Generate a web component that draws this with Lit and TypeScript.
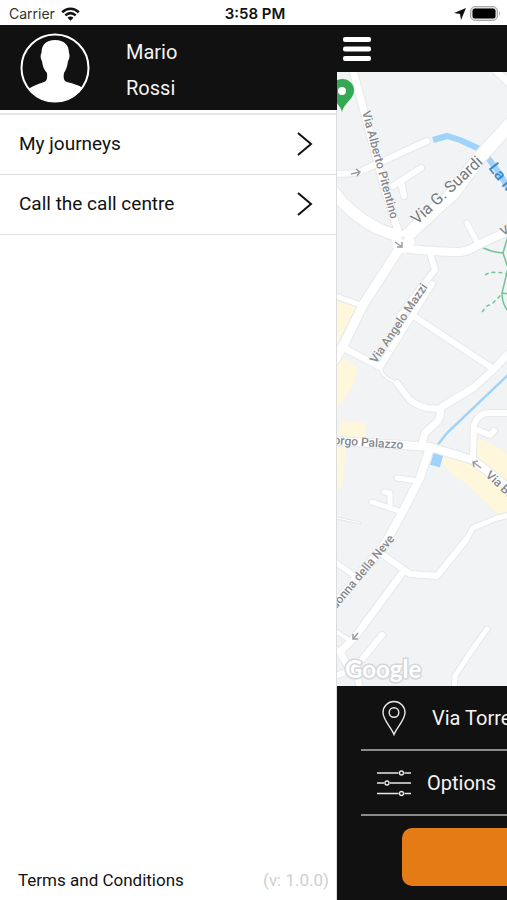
import { LitElement, html, css, svg } from "lit";
import { customElement } from "lit/decorators.js";

interface Road {
  d: string;
  w: number;
}

const roads: Road[] = [
  { d: "M337 518L360 523", w: 1 },
  { d: "M380 367Q382 378 397 383", w: 2 },
  { d: "M353 70L365 115L385 190L401 240", w: 7 },
  { d: "M335 174L357 173L427 141", w: 6 },
  { d: "M421 168L393 186M401 182L404 196", w: 6 },
  { d: "M334 192Q350 214 377 228L402 238", w: 11 },
  { d: "M400 243L414 229L453 193L480 157L510 124", w: 13 },
  { d: "M493 68L510 84", w: 7 },
  { d: "M400 240L410 249Q440 252 460 252Q469 251 478 245L510 230", w: 8 },
  { d: "M467 223L478 244", w: 5 },
  { d: "M401 246L363 305L342 348L335 360", w: 9 },
  { d: "M335 296L363 306", w: 5 },
  { d: "M342 347L380 367L432 284M430 253L435 270L427 280L400 316", w: 6 },
  { d: "M415 317L492 368", w: 6 },
  { d: "M397 383L410 400Q418 406 427 408L440 409", w: 6 },
  { d: "M510 352L492 371L473 388L443 406Q440 409 440 416L438 421L425 433L421 446", w: 7 },
  { d: "M335 441L403 445L430 447L473 460L510 489", w: 8 },
  { d: "M430 448L420 478L402 513L383 547L355 580L335 604", w: 8 },
  { d: "M397 478L418 481M372 502L402 512M390 506L390 493L384 492", w: 5 },
  { d: "M473 459L474 425Q478 414 487 413L510 413M477 430L490 435L494 431", w: 6 },
  { d: "M383 555L410 574L437 576L466 540", w: 6 },
  { d: "M466 540L473 528L497 518L510 515", w: 5 },
  { d: "M403 572L355 637L340 652L349 668", w: 7 },
  { d: "M335 562L356 577", w: 5 },
  { d: "M335 631L351 641M335 647L342 655", w: 4 },
  { d: "M382 635L360 662L352 670L335 676M356 670L360 690", w: 6 },
  { d: "M487 629L470 653L455 676L454 690", w: 5 },
];

@customElement("city-map")
class CityMap extends LitElement {
  static styles = css`
    :host {
      display: block;
      overflow: hidden;
      background: #f1f3f4;
    }
    .map {
      display: block;
      width: 100vw;
      height: 100%;
      font-family: Roboto, sans-serif;
    }
    .casing,
    .road {
      fill: none;
      stroke-linecap: round;
      stroke-linejoin: round;
    }
    .casing {
      stroke: #e6e8ea;
    }
    .road {
      stroke: #ffffff;
    }
    .area {
      fill: #fef7dc;
    }
    .water {
      fill: none;
      stroke: #a0d3fa;
    }
    .path {
      fill: none;
      stroke: #71c596;
      stroke-width: 1.5;
    }
    .label {
      font-size: 12px;
      font-weight: 500;
      fill: #85888c;
      stroke: #ffffff;
      stroke-width: 1;
      paint-order: stroke;
    }
    .major {
      font-size: 16px;
      font-weight: 400;
      fill: #75787c;
    }
    .river {
      font-size: 16px;
      fill: #4285c8;
      stroke: none;
    }
    .brand {
      font-family: Lato, sans-serif;
      font-size: 24px;
      font-weight: 700;
      fill: #ffffff;
      stroke: #d4d6d8;
      stroke-width: 3;
      paint-order: stroke;
    }
    .arrow {
      fill: none;
      stroke: #9a9da2;
      stroke-width: 1.5;
    }
  `;

  render() {
    return html`
      <svg class="map" viewBox="337 72 507 614" preserveAspectRatio="xMinYMin slice" role="img" aria-label="Map">
        <g class="area">
          <path d="M337 300L358 308L337 344Z" />
          <path d="M337 355L358 367L355 382L342 403L337 405Z" />
          <path d="M343 420L365 423L365 440L346 447L342 487L337 490V438Z" />
          <path d="M443 457L473 463L510 493V515L497 513L485 502L467 484L455 477L442 463Z" />
          <path d="M478 438L503 450L510 458V487L475 458Z" />
        </g>
        <path class="water" stroke-width="6" d="M433 140L447 136L460 140L482 150L497 170L510 190" />
        <path class="water" stroke-width="2.500" d="M510 373L447 433L436 447" />
        <path class="water" stroke-width="10" d="M439 452L435 466" />
        <g class="path">
          <path d="M482 247Q490 252 503 253M508 236L503 253L508 268L502 293Q502 305 509 312M502 293L509 294" />
          <path stroke-dasharray="4 3" d="M485 275Q492 270 507 274M482 312L487 306L493 303L502 294" />
        </g>
        ${roads.map((r) => svg`<path class="casing" stroke-width=${r.w + 2} d=${r.d} />`)}
        ${roads.map((r) => svg`<path class="road" stroke-width=${r.w} d=${r.d} />`)}
        <circle class="road" cx="403" cy="242" r="6" stroke-width="10" />
        <circle cx="403" cy="238" r="2" fill="#eceef0" />
        <g class="arrow">
          <path d="M351 174L360 172M356 169L360 172L357 176" />
          <path d="M395 242L402 247M402 242V247H397" />
          <path d="M481 468L473 462M474 467L473 462L478 461" />
          <path d="M358 633L353 639M353 634V639H358" />
        </g>
        <path
          fill="#34a853"
          d="M342 112C341 105 331 100 331 90.500A11.500 11.500 0 0 1 354 90.500C354 99 344 103 342 112Z"
        />
        <circle cx="342" cy="91" r="4" fill="#ffffff" />
        <text class="label" transform="translate(362 112) rotate(75)">Via Alberto Pitentino</text>
        <text class="label major" transform="translate(417 225) rotate(-43)">Via G. Suardi</text>
        <text class="label" transform="translate(376 364) rotate(-56)">Via Angelo Mazzi</text>
        <text class="label" text-anchor="end" transform="translate(403 449) rotate(4)">Borgo Palazzo</text>
        <text class="label" transform="translate(485 476) rotate(43)">Via Borgo Palazzo</text>
        <text class="label" text-anchor="end" transform="translate(395 539) rotate(-50)">Madonna della Neve</text>
        <text class="label" transform="translate(503 236) rotate(-28)">Via</text>
        <text class="label river" transform="translate(488 168) rotate(52)">La Morla</text>
        <text class="brand" x="345" y="678">Google</text>
      </svg>
    `;
  }
}

@customElement("app-root")
class AppRoot extends LitElement {
  static styles = css`
    :host {
      display: flex;
      flex-direction: column;
      height: 100vh;
      overflow: hidden;
      background: #ffffff;
      color: #111111;
      font-family: Roboto, sans-serif;
    }
    svg {
      display: block;
      flex: none;
    }
    .status {
      flex: none;
      display: grid;
      grid-template-columns: 1fr auto 1fr;
      align-items: center;
      height: 25px;
      padding: 2px 6px 0 9px;
      box-sizing: border-box;
      font-family: Inter, sans-serif;
      font-size: 14px;
      line-height: 20px;
    }
    .carrier {
      display: flex;
      align-items: center;
      gap: 6px;
      color: #333333;
    }
    .time {
      font-size: 15px;
      font-weight: 600;
    }
    .indicators {
      display: flex;
      justify-content: flex-end;
      align-items: center;
      gap: 4px;
    }
    .body {
      flex: 1;
      min-height: 0;
      display: flex;
    }
    .drawer {
      flex: none;
      width: min(337px, 80vw);
      display: flex;
      flex-direction: column;
      box-sizing: border-box;
      border-right: 1px solid #dcdcdc;
    }
    .profile {
      display: flex;
      align-items: center;
      gap: 36px;
      height: 85px;
      padding-left: 20px;
      margin-right: -1px;
      background: #111111;
      color: #f4f4f4;
      font-size: 20px;
      line-height: 36px;
    }
    .name {
      padding-top: 4px;
    }
    .name span {
      display: block;
    }
    .menu {
      margin: 3px 0 0;
      padding: 0;
      list-style: none;
      border-top: 2px solid #e6e6e6;
    }
    .item {
      display: flex;
      justify-content: space-between;
      align-items: center;
      width: 100%;
      height: 60px;
      padding: 0 22px 2px 19px;
      box-sizing: border-box;
      border: 0;
      border-bottom: 1px solid #dddddd;
      background: none;
      color: inherit;
      font: inherit;
      font-size: 19px;
    }
    .foot {
      display: flex;
      justify-content: space-between;
      align-items: center;
      margin-top: auto;
      padding: 0 7px 8px 18px;
      font-size: 17px;
      line-height: 24px;
    }
    .terms {
      color: inherit;
      text-decoration: none;
    }
    .version {
      color: #cfcfcf;
    }
    .pane {
      flex: 1;
      min-width: 0;
      overflow: hidden;
    }
    .screen {
      display: flex;
      flex-direction: column;
      width: 100vw;
      height: 100%;
      background: #111111;
    }
    .bar {
      flex: none;
      display: flex;
      align-items: center;
      height: 47px;
      padding-left: 6px;
    }
    .burger {
      padding: 0;
      border: 0;
      background: none;
    }
    city-map {
      flex: 1;
      min-height: 0;
    }
    .panel {
      flex: none;
      display: flex;
      flex-direction: column;
      padding: 0 24px 14px;
    }
    .option {
      display: flex;
      align-items: center;
      height: 65px;
      padding: 0 0 0 16px;
      box-sizing: border-box;
      border: 0;
      border-bottom: 2px solid #8a8a8a;
      background: none;
      color: #f4f4f4;
      font: inherit;
      font-size: 20px;
    }
    .place {
      gap: 21px;
    }
    .confirm {
      height: 58px;
      margin: 12px 41px 0;
      border: 0;
      border-radius: 10px;
      background: #e47b14;
    }
  `;

  private item(label: string) {
    return html`<li>
      <button class="item">
        ${label}
        <svg width="18" height="26" viewBox="0 0 18 26" fill="none" stroke="#111111" stroke-width="2">
          <path d="M2 2L15 13L2 24" />
        </svg>
      </button>
    </li>`;
  }

  render() {
    return html`
      <header class="status">
        <div class="carrier">
          Carrier
          <svg width="19" height="14" viewBox="0 0 19 14" fill="none" stroke="#111111" stroke-width="2.600">
            <path d="M1.200 5.200C6 0.600 13 0.600 17.800 5.200M4.300 8.400C7.500 5.500 11.500 5.500 14.700 8.400" />
            <path d="M9.500 13.800L6.500 10.700C8.300 9.200 10.700 9.200 12.500 10.700Z" fill="#111111" stroke="none" />
          </svg>
        </div>
        <div class="time">3:58 PM</div>
        <div class="indicators">
          <svg width="12" height="12" viewBox="0 0 12 12"><path fill="#111111" d="M12 0L7 12L6 6L0 5Z" /></svg>
          <svg width="31" height="15" viewBox="0 0 31 15">
            <rect x="0.500" y="0.500" width="27" height="14" rx="4.500" fill="#dddddd" stroke="#a8a8a8" />
            <rect x="2.500" y="2.500" width="23" height="10" rx="2.500" fill="#000000" />
            <path d="M29 5Q31 7.500 29 10Z" fill="#a8a8a8" />
          </svg>
        </div>
      </header>
      <div class="body">
        <nav class="drawer">
          <div class="profile">
            <svg width="70" height="70" viewBox="0 0 70 70">
              <circle cx="35" cy="35" r="33.500" fill="none" stroke="#ffffff" stroke-width="2" />
              <path
                fill="#ffffff"
                d="M35 7C44 7 49 12 49 20C50 22 49.500 26 48 28C47.500 33 46 37 44 40C43 45 44 48 47 49C54 51 59 52 62.500 55A33.500 33.500 0 0 1 9.500 57L10 55C13 53 18 51 24 49C27 48 27.500 45 27 40C24 37 22.500 33 22 28C20.500 26 20 22 21.500 20C21.500 12 26 7 35 7Z"
              />
            </svg>
            <div class="name"><span>Mario</span><span>Rossi</span></div>
          </div>
          <ul class="menu">
            ${this.item("My journeys")} ${this.item("Call the call centre")}
          </ul>
          <div class="foot">
            <a class="terms" href="#terms">Terms and Conditions</a>
            <span class="version">(v: 1.0.0)</span>
          </div>
        </nav>
        <main class="pane">
          <div class="screen">
            <div class="bar">
              <button class="burger" aria-label="Menu">
                <svg width="28" height="24" viewBox="0 0 28 24" fill="#ffffff">
                  <rect width="28" height="5" rx="2" />
                  <rect y="9.500" width="28" height="5" rx="2" />
                  <rect y="19" width="28" height="5" rx="2" />
                </svg>
              </button>
            </div>
            <city-map></city-map>
            <div class="panel">
              <button class="option place">
                <svg width="34" height="36" viewBox="0 0 34 36" fill="none" stroke="#e8e8e8" stroke-width="1.400">
                  <path d="M17 34.500C14 27 6 20 6 12.500A11 11 0 0 1 28 12.500C28 20 20 27 17 34.500Z" />
                  <circle cx="17" cy="12.500" r="4.800" />
                </svg>
                Via Torretta
              </button>
              <button class="option">
                <svg width="50" height="28" viewBox="0 0 50 28" fill="none" stroke="#e8e8e8" stroke-width="1.400">
                  <path d="M0 4H21.500M27.500 4H34M0 14H7M13 14H34M0 24.500H21.500M27.500 24.500H34" />
                  <circle cx="24.500" cy="4" r="2" />
                  <circle cx="10" cy="14" r="2" />
                  <circle cx="24.500" cy="24.500" r="2" />
                </svg>
                Options
              </button>
              <button class="confirm" aria-label="Confirm"></button>
            </div>
          </div>
        </main>
      </div>
    `;
  }
}
